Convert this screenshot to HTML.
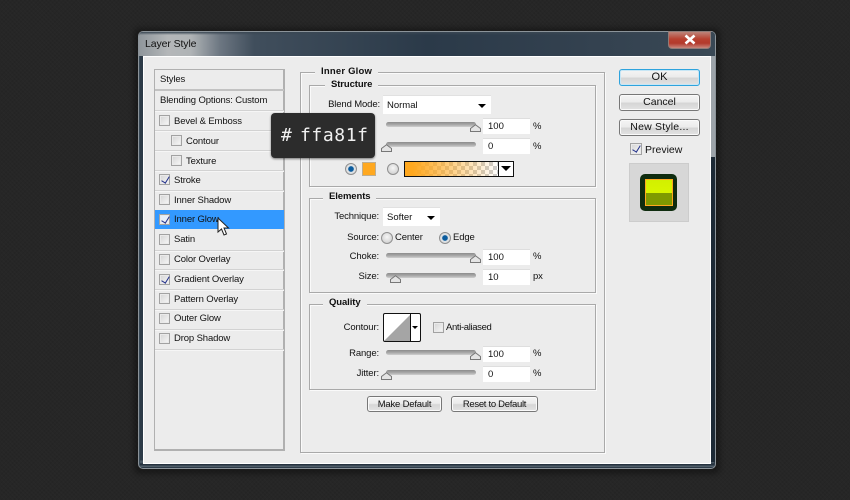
<!DOCTYPE html>
<html><head><meta charset="utf-8"><style>
*{box-sizing:border-box}
html,body{margin:0;padding:0;width:850px;height:500px;overflow:hidden;background:#262626}
body{position:relative;font-family:"Liberation Sans",sans-serif;font-size:9.5px;color:#111}
#bg{position:absolute;inset:0;background-color:#262626;background-image:repeating-linear-gradient(45deg,rgba(255,255,255,.012) 0 1px,transparent 1px 3px),repeating-linear-gradient(-45deg,rgba(0,0,0,.05) 0 1px,transparent 1px 3px)}
.a{position:absolute}
.t{position:absolute;white-space:nowrap;line-height:12px;font-size:9.5px;letter-spacing:-.13px;color:#111;margin-top:1px}
.r{text-align:right}
.fs{position:absolute;border:1px solid #a9a9a9;box-shadow:inset 1px 1px 0 #fafafa,1px 1px 0 #fafafa}
.lg{position:absolute;background:#ececec;padding:0 6px;white-space:nowrap;font-weight:bold;line-height:12px;font-size:9.5px;letter-spacing:-.1px;color:#111;margin-top:1px}
.row{position:absolute;left:155px;width:129px;height:1px;background:#d2d2d2;box-shadow:0 1px 0 #f6f6f6}
.cb{position:absolute;width:11px;height:11px;border:1px solid #a2a2a2;background:linear-gradient(135deg,#d4d4d4,#f8f8f8);box-shadow:inset 0 0 0 1px #eaeaea}
.ck::after{content:"";position:absolute;left:3px;top:0;width:4px;height:7px;border:solid #22308a;border-width:0 1.6px 1.6px 0;transform:rotate(32deg)}
.btn{position:absolute;border:1px solid #777;border-radius:3px;background:linear-gradient(#f4f4f4 0,#ececec 45%,#d6d6d6 55%,#e3e3e3 100%);text-align:center;font-size:10.5px;color:#111;box-shadow:inset 0 0 0 1px #fafafa}
.inp{position:absolute;width:47px;height:16px;background:#fff;border-top:1px solid #dedede;padding:2px 0 0 5px;line-height:12px;font-size:9.5px;color:#111}
.sl{position:absolute;width:90px;height:5px;background:linear-gradient(#8c8c8c,#adadad 60%,#cfcfcf);border-radius:2.5px}
.th{position:absolute;width:11px;height:8px}
.sel{position:absolute;height:19px;background:#fff;border-top:1px solid #e1e1e1;line-height:19px;padding-left:4px;font-size:9.5px}
.sel::after{content:"";position:absolute;right:5px;top:8px;border:solid transparent;border-width:4px 4px 0;border-top-color:#000}
.rad{position:absolute;width:12px;height:12px;border-radius:50%;border:1px solid #909090;background:radial-gradient(circle at 50% 40%,#f6f6f6,#c8c8c8)}
.rad.on{background:radial-gradient(circle,#0b5c9e 0 2.4px,#dfe3e6 3.2px,#d6d6d6)}
</style></head><body>
<div id="bg"></div>
<div class="a" style="left:134px;top:28px;width:586px;height:446px;background:#000;opacity:.35;filter:blur(3px);border-radius:6px"></div>
<div class="a" style="left:138px;top:31px;width:578px;height:438px;border-radius:5px;border:1px solid #8b9399;background:linear-gradient(90deg,#2c3a47,#2f3d4b 50%,#2c3a47);box-shadow:inset 1px 1px 0 #3a4a57"></div>
<div class="a" style="left:139px;top:32px;width:576px;height:24px;border-radius:4px 4px 0 0;background:linear-gradient(90deg,#8f969b 0,#b4b7b9 5%,#b0b4b6 9%,#6d7782 14%,#404e5c 20%,#2b3a49 50%,#344250 80%,#394855 100%)"></div>
<div class="a" style="left:139px;top:32px;width:576px;height:3px;border-radius:4px 4px 0 0;background:linear-gradient(#3a4753,rgba(58,71,83,0))"></div>
<div class="a" style="left:140px;top:460px;width:574px;height:7px;background:linear-gradient(#3a4651,#53616d 30%,#1f2c39 60%,#5a6873)"></div>
<div class="a" style="left:711px;top:157px;width:4px;height:305px;background:#1d2a36"></div>
<div class="a" style="left:711px;top:56px;width:4px;height:101px;background:#9ca3a9"></div>
<div class="t" style="left:145px;top:37px;font-size:10.5px;letter-spacing:-.1px;color:#111">Layer Style</div>
<div class="a" style="left:668px;top:31px;width:43px;height:18px;border-radius:0 0 4px 4px;border:1px solid #8f7c78;background:linear-gradient(#bd8479,#b9402f 45%,#b33a2c 70%,#c9867b)"></div>
<svg class="a" style="left:684px;top:34px" width="12" height="11"><path d="M1.5 1.5L10.5 9.5M10.5 1.5L1.5 9.5" stroke="#fff" stroke-width="2.6" fill="none"/></svg>
<div class="a" style="left:143px;top:56px;width:568px;height:408px;background:#ececec;border:1px solid #fff"></div>

<!-- left list -->
<div class="a" style="left:154px;top:69px;width:131px;height:382px;border:1px solid #b0b0b0;border-width:1px 2px 2px 1px;background:#ececec"></div>
<div class="a" style="left:155px;top:89px;width:129px;height:2px;background:#c2c2c2"></div>
<div class="row" style="top:110px"></div><div class="row" style="top:130px"></div><div class="row" style="top:150px"></div><div class="row" style="top:170px"></div><div class="row" style="top:190px"></div><div class="row" style="top:250px"></div><div class="row" style="top:269px"></div><div class="row" style="top:289px"></div><div class="row" style="top:309px"></div><div class="row" style="top:329px"></div><div class="row" style="top:349px"></div>
<div class="t" style="left:160px;top:73px">Styles</div>
<div class="t" style="left:160px;top:94px">Blending Options: Custom</div>
<div class="cb" style="left:159px;top:115px"></div><div class="t" style="left:174px;top:115px">Bevel &amp; Emboss</div>
<div class="cb" style="left:171px;top:135px"></div><div class="t" style="left:186px;top:135px">Contour</div>
<div class="cb" style="left:171px;top:155px"></div><div class="t" style="left:186px;top:155px">Texture</div>
<div class="cb ck" style="left:159px;top:174px"></div><div class="t" style="left:174px;top:174px">Stroke</div>
<div class="cb" style="left:159px;top:194px"></div><div class="t" style="left:174px;top:194px">Inner Shadow</div>
<div class="a" style="left:155px;top:210px;width:129px;height:19px;background:#3399ff"></div>
<div class="cb ck" style="left:159px;top:214px;background:#e8eef8"></div><div class="t" style="left:174px;top:213px">Inner Glow</div>
<svg class="a" style="left:216px;top:217px" width="14" height="20" viewBox="0 0 14 20"><path d="M2 1 L2 15 L5.5 12 L8 18 L10.5 17 L8 11 L12.5 11 Z" fill="#fff" stroke="#222" stroke-width="1"/></svg>
<div class="cb" style="left:159px;top:234px"></div><div class="t" style="left:174px;top:233px">Satin</div>
<div class="cb" style="left:159px;top:254px"></div><div class="t" style="left:174px;top:253px">Color Overlay</div>
<div class="cb ck" style="left:159px;top:274px"></div><div class="t" style="left:174px;top:273px">Gradient Overlay</div>
<div class="cb" style="left:159px;top:293px"></div><div class="t" style="left:174px;top:293px">Pattern Overlay</div>
<div class="cb" style="left:159px;top:313px"></div><div class="t" style="left:174px;top:312px">Outer Glow</div>
<div class="cb" style="left:159px;top:333px"></div><div class="t" style="left:174px;top:332px">Drop Shadow</div>

<!-- panels -->
<div class="fs" style="left:300px;top:72px;width:305px;height:381px"></div>
<div class="lg" style="left:315px;top:65px;letter-spacing:.2px">Inner Glow</div>
<div class="fs" style="left:309px;top:85px;width:287px;height:102px"></div>
<div class="lg" style="left:325px;top:78px">Structure</div>
<div class="t r" style="left:310px;top:98px;width:70px">Blend Mode:</div>
<div class="sel" style="left:383px;top:95px;width:108px">Normal</div>
<div class="sl" style="left:386px;top:122px"></div>
<svg class="th" style="left:470px;top:124px"><path d="M.5 7.5V4.5L5.5 .7 10.5 4.5V7.5Z" fill="#e4e4e4" stroke="#777"/></svg>
<div class="inp" style="left:483px;top:118px">100</div><div class="t" style="left:533px;top:120px">%</div>
<div class="sl" style="left:386px;top:142px"></div>
<svg class="th" style="left:381px;top:144px"><path d="M.5 7.5V4.5L5.5 .7 10.5 4.5V7.5Z" fill="#e4e4e4" stroke="#777"/></svg>
<div class="inp" style="left:483px;top:138px">0</div><div class="t" style="left:533px;top:140px">%</div>
<div class="rad on" style="left:345px;top:163px"></div>
<div class="a" style="left:362px;top:162px;width:14px;height:14px;background:#ffa81f;border:1px solid #bfae90"></div>
<div class="rad" style="left:387px;top:163px"></div>
<div class="a" style="left:404px;top:161px;width:110px;height:16px;border:1px solid #111;background:#fff"></div>
<div class="a" style="left:405px;top:162px;width:93px;height:14px;background:linear-gradient(90deg,#ffa81f 0,#ffa81f 8%,rgba(255,168,31,0) 100%),conic-gradient(#ccc 25%,#fff 0 50%,#ccc 0 75%,#fff 0) 0 0/8px 8px"></div>
<div class="a" style="left:498px;top:161px;width:1px;height:16px;background:#111"></div>
<div class="a" style="left:501px;top:166px;border:solid transparent;border-width:5px 5px 0;border-top-color:#000"></div>

<div class="fs" style="left:309px;top:198px;width:287px;height:95px"></div>
<div class="lg" style="left:323px;top:190px">Elements</div>
<div class="t r" style="left:310px;top:210px;width:69px">Technique:</div>
<div class="sel" style="left:383px;top:207px;width:57px">Softer</div>
<div class="t r" style="left:310px;top:231px;width:69px">Source:</div>
<div class="rad" style="left:381px;top:232px"></div><div class="t" style="left:395px;top:231px">Center</div>
<div class="rad on" style="left:439px;top:232px"></div><div class="t" style="left:453px;top:231px">Edge</div>
<div class="t r" style="left:310px;top:250px;width:69px">Choke:</div>
<div class="sl" style="left:386px;top:253px"></div>
<svg class="th" style="left:470px;top:255px"><path d="M.5 7.5V4.5L5.5 .7 10.5 4.5V7.5Z" fill="#e4e4e4" stroke="#777"/></svg>
<div class="inp" style="left:483px;top:249px">100</div><div class="t" style="left:533px;top:250px">%</div>
<div class="t r" style="left:310px;top:270px;width:69px">Size:</div>
<div class="sl" style="left:386px;top:273px"></div>
<svg class="th" style="left:390px;top:275px"><path d="M.5 7.5V4.5L5.5 .7 10.5 4.5V7.5Z" fill="#e4e4e4" stroke="#777"/></svg>
<div class="inp" style="left:483px;top:269px">10</div><div class="t" style="left:533px;top:270px">px</div>

<div class="fs" style="left:309px;top:304px;width:287px;height:86px"></div>
<div class="lg" style="left:323px;top:296px">Quality</div>
<div class="t r" style="left:310px;top:321px;width:69px">Contour:</div>
<div class="a" style="left:383px;top:313px;width:38px;height:29px;border:1px solid #111;border-radius:2px;background:#fff"></div>
<svg class="a" style="left:384px;top:314px" width="26" height="27"><path d="M0 27L26 1V27Z" fill="#a5a5a5"/></svg>
<div class="a" style="left:410px;top:314px;width:1px;height:27px;background:#111"></div>
<div class="a" style="left:412px;top:326px;border:solid transparent;border-width:3px 3px 0;border-top-color:#000"></div>
<div class="cb" style="left:433px;top:322px"></div><div class="t" style="left:446px;top:321px;letter-spacing:-.35px">Anti-aliased</div>
<div class="t r" style="left:310px;top:347px;width:69px">Range:</div>
<div class="sl" style="left:386px;top:350px"></div>
<svg class="th" style="left:470px;top:352px"><path d="M.5 7.5V4.5L5.5 .7 10.5 4.5V7.5Z" fill="#e4e4e4" stroke="#777"/></svg>
<div class="inp" style="left:483px;top:346px">100</div><div class="t" style="left:533px;top:347px">%</div>
<div class="t r" style="left:310px;top:367px;width:69px">Jitter:</div>
<div class="sl" style="left:386px;top:370px"></div>
<svg class="th" style="left:381px;top:372px"><path d="M.5 7.5V4.5L5.5 .7 10.5 4.5V7.5Z" fill="#e4e4e4" stroke="#777"/></svg>
<div class="inp" style="left:483px;top:366px">0</div><div class="t" style="left:533px;top:367px">%</div>

<div class="btn" style="left:367px;top:396px;width:75px;height:16px;line-height:15px;font-size:9.5px;letter-spacing:-.2px">Make Default</div>
<div class="btn" style="left:451px;top:396px;width:87px;height:16px;line-height:15px;font-size:9.5px;letter-spacing:-.3px">Reset to Default</div>

<!-- right -->
<div class="btn" style="left:619px;top:69px;width:81px;height:17px;line-height:15px;border-color:#2ea3dd;box-shadow:inset 0 0 0 1px #c7e6f5;font-size:11px">OK</div>
<div class="btn" style="left:619px;top:94px;width:81px;height:17px;line-height:15px">Cancel</div>
<div class="btn" style="left:619px;top:119px;width:81px;height:17px;line-height:15px;letter-spacing:.2px">New Style...</div>
<div class="cb ck" style="left:630px;top:143px;width:12px;height:12px"></div>
<div class="t" style="left:645px;top:143px;font-size:10.5px;letter-spacing:0">Preview</div>
<div class="a" style="left:629px;top:163px;width:60px;height:59px;background:#d7d7d7;border:1px solid #ccc"></div>
<div class="a" style="left:640px;top:174px;width:37px;height:37px;background:#0f2c0f;border-radius:5px"></div>
<div class="a" style="left:645px;top:179px;width:28px;height:27px;border:1px solid #ffa81f;background:linear-gradient(#d2f000 0,#d8f500 52%,#7f9a00 52%,#7f9a00 100%)"></div>

<!-- tooltip -->
<div class="a" style="left:271px;top:113px;width:104px;height:45px;background:#2c2c2c;border-radius:4px;box-shadow:0 1px 2px rgba(0,0,0,.5)"></div>
<div class="a" style="left:281px;top:124px;color:#f0f0f0;font-family:'DejaVu Sans Mono',monospace;font-size:18px;line-height:24px;white-space:nowrap">#</div>
<div class="a" style="left:300px;top:124px;color:#f0f0f0;font-family:'DejaVu Sans Mono',monospace;font-size:18px;line-height:24px;white-space:nowrap;letter-spacing:.6px">ffa81f</div>
</body></html>
